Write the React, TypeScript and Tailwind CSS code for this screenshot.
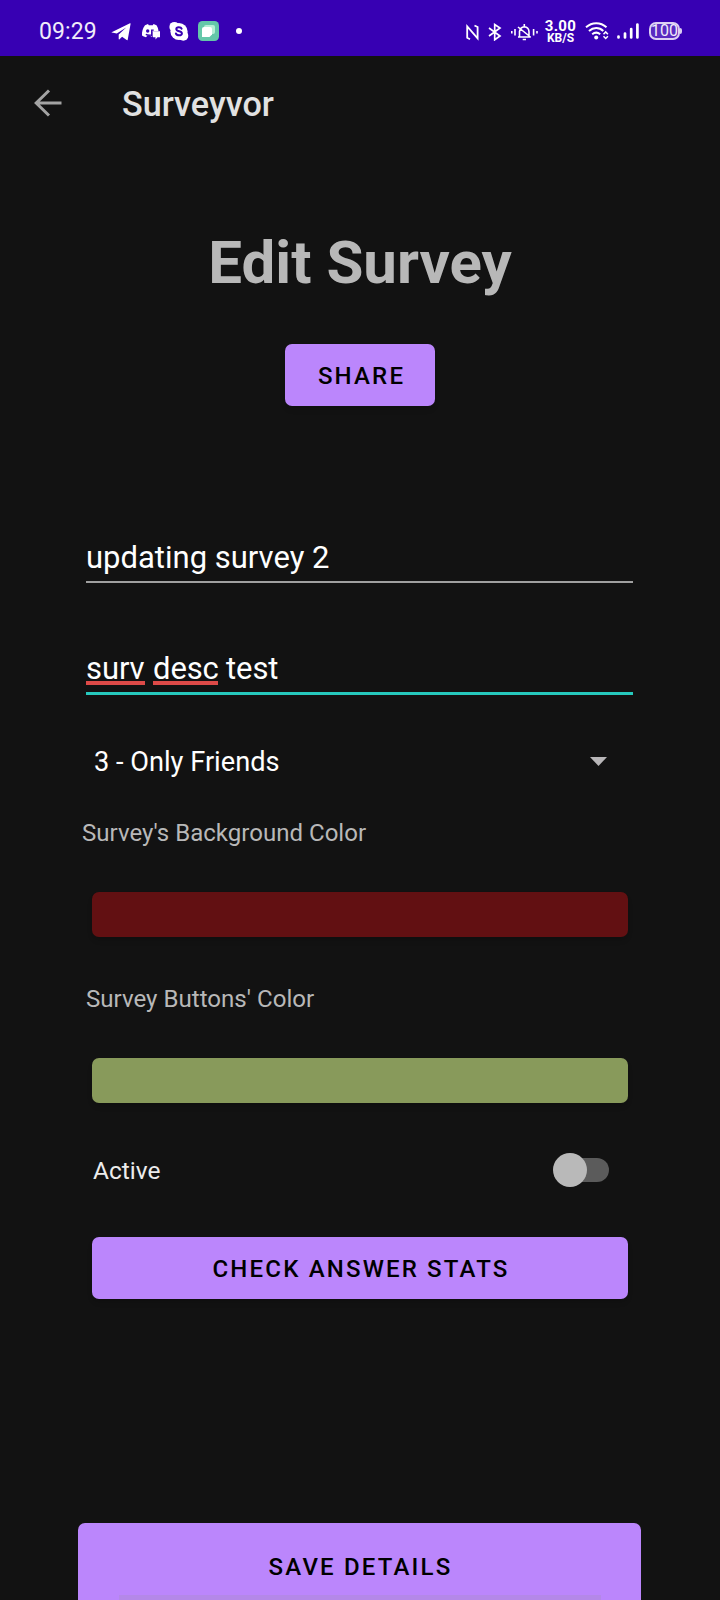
import type { ReactNode } from "react";

type IconProps = { className: string; viewBox: string; children: ReactNode };

function Glyph({ className, viewBox, children }: IconProps) {
  return (
    <svg className={`block shrink-0 ${className}`} viewBox={viewBox} fill="none" stroke="none">
      {children}
    </svg>
  );
}

function StatusBar() {
  return (
    <header className="flex h-14 items-start bg-[#3700b3] pl-[39px] pt-[18px] text-white">
      <span className="w-[72px] whitespace-nowrap pt-px text-[23px] font-normal leading-[26px] tracking-[0.100px] text-[#f1ecfa]">
        09:29
      </span>
      <Glyph className="mt-[4px] h-[20px] w-[20px]" viewBox="0 0 20 20">
        <path fill="#fff" d="M.6 10.2 19 1.2c.4-.2.7.1.6.5l-2.9 16c-.1.6-.6.7-1 .4l-4.600-3.400-2.600 2.600c-.4.4-.8.2-.8-.3v-4.400l7.500-7.200-9.400 6.200-5-1c-.4 0-.5-.2-.2-.4Z" />
      </Glyph>
      <Glyph className="ml-[10px] mt-[4px] h-[20px] w-[20px]" viewBox="0 0 20 20">
        <path fill="#fff" d="M4 3.300 7 2l.8 1.200h4L12.500 2l3 1.300c1.200 1.800 1.900 3.800 2 6h-6v5.200H10l-1-1.200H6.700l-1.700 2c-1.600-.4-2.900-1-4-1.800C.8 9.500 1.800 6.300 4 3.300Z" />
        <circle cx="6.700" cy="9" r="1.700" fill="#3700b3" />
        <path stroke="#3700b3" strokeWidth="1.300" d="M4.800 12.400c1.500.8 3.500 1 6 .6M10.700 14V8.200h2" />
        <path fill="#fff" d="M12 9.300h7v6h-2.500l-2 2.300v-2.300H12Z" />
      </Glyph>
      <Glyph className="ml-[8px] mt-[3px] h-[20px] w-[20px]" viewBox="0 0 20 20">
        <circle cx="10" cy="10.500" r="8.600" fill="#fff" />
        <circle cx="5.400" cy="5.900" r="5" fill="#fff" />
        <circle cx="14.300" cy="14.800" r="5" fill="#fff" />
        <path stroke="#3700b3" strokeWidth="2" strokeLinecap="round" d="M12.600 7.700C11.900 5.800 7.400 5.700 7.300 8c0 3 5.700 1.500 5.600 4.500-.1 2.500-5.200 2.500-6-.1" />
      </Glyph>
      <Glyph className="ml-[9px] mt-[3px] h-[20px] w-[21px]" viewBox="0 0 21 20">
        <rect width="21" height="20" rx="4.500" fill="#64c7a9" />
        <rect x="6" y="4" width="11" height="9" rx="2" fill="#b5efd5" />
        <path fill="#fff" d="M6 6h6a2 2 0 0 1 2 2v5.500L11.500 16H4V8a2 2 0 0 1 2-2Z" />
      </Glyph>
      <span className="ml-[17px] mt-[10px] h-1.5 w-1.5 shrink-0 rounded-full bg-white" />
      <Glyph className="ml-[224px] mt-[6px] h-[17px] w-[13px]" viewBox="0 0 13 17">
        <path stroke="#fff" strokeWidth="1.800" d="M4 15.200 1.200 13.800V2.500l10.400 11.800V3L8.500 1.500" />
      </Glyph>
      <Glyph className="ml-[9px] mt-[5px] h-[18px] w-[14px]" viewBox="0 0 14 18">
        <path stroke="#fff" strokeWidth="1.700" d="m1 5 11 8-5.300 3.800V1.500L12 5 1 13" />
      </Glyph>
      <Glyph className="ml-[9px] mt-[5px] h-[18px] w-[27px]" viewBox="0 0 27 18">
        <path stroke="#fff" strokeWidth="1.600" d="M.8 8v2.500M4 6v6.500M22.600 6v6.500M26 8v2.500M7 14h12.800M8.500 13.500V8.300C9 5.500 10.500 4 13.300 3.700c3 .3 4.600 2 4.700 5v5M7 4l12.500 10M13.300 1v3M11.700 16.500h3.300" />
      </Glyph>
      <div className="ml-[7px] mt-[2px] flex w-[31px] shrink-0 flex-col items-center whitespace-nowrap font-bold">
        <span className="h-[13px] text-[15px] leading-[12px] tracking-[0.300px]">3.00</span>
        <span className="h-[11px] text-[12px] leading-[11px]">KB/S</span>
      </div>
      <Glyph className="ml-[9px] mt-[4px] h-[18px] w-[24px]" viewBox="0 0 24 18">
        <path stroke="#fff" strokeWidth="2" d="M1 5.300C7-.1 15.500-.1 21.500 5.300M4 9c4.300-4 10.300-4 14.300 0M7.200 12.300c2.400-2 5.600-2 8 0" />
        <circle cx="11.200" cy="15.500" r="2" fill="#fff" />
        <path stroke="#fff" strokeWidth="1.500" d="m18.500 12.200 2.200-2.300 2.200 2.300M18.500 14.200l2.200 2.300 2.200-2.300" />
      </Glyph>
      <Glyph className="ml-[8px] mt-[5px] h-[16px] w-[22px]" viewBox="0 0 22 16">
        <path stroke="#fff" strokeWidth="2.700" strokeLinecap="round" d="M1.500 13.500v1M8 10.500v4M14.200 6v8.500M20.400 1.500v13" />
      </Glyph>
      <div className="ml-[10px] mt-[4px] flex h-[18px] w-[31px] shrink-0 items-center justify-center rounded-[7px] border-2 border-[#dcd0f3] bg-[#5a2bc1] text-[16px] font-normal leading-[16px] text-[#f1ecfa]">
        100
      </div>
      <span className="mt-[10px] h-1.5 w-[2px] shrink-0 rounded-r bg-[#d9ccf2]" />
    </header>
  );
}

function AppBar() {
  return (
    <div className="flex h-[96px] items-center pl-[34px]">
      <Glyph className="h-7 w-7" viewBox="0 0 28 28">
        <path stroke="#a3a3a3" strokeWidth="3" d="M27.500 14H2M15 1.500 2.200 14 15 26.500" />
      </Glyph>
      <h2 className="ml-[60px] pt-[2px] text-[34.200px] font-medium leading-10 text-[#e1e1e1]">Surveyvor</h2>
    </div>
  );
}

const buttonText = "text-[24px] font-medium tracking-[2.180px] text-black leading-7";

export default function App() {
  return (
    <div className="flex h-[1600px] w-[720px] flex-col overflow-hidden bg-[#121212] font-['Roboto',sans-serif]">
      <StatusBar />
      <AppBar />
      <main className="flex flex-col">
        <h1 className="mt-[77px] text-center text-[60px] font-bold leading-[70px] text-[#b8b8b8]">Edit Survey</h1>
        <button className={`mt-[46px] h-[62px] w-[150px] self-center rounded-[7px] bg-[#bb86fc] pl-[3px] pt-[2px] shadow-md ${buttonText}`}>
          SHARE
        </button>

        <div className="ml-[86px] mt-[133px] flex h-[44px] w-[547px] flex-col border-b-2 border-[#a0a0a0] pt-px text-[31px] leading-9 text-white">
          <span>updating survey 2</span>
        </div>
        <div className="ml-[86px] mt-[67px] flex h-[45px] w-[547px] items-start gap-[8px] border-b-3 border-[#26c9bd] pt-px text-[31px] leading-9 tracking-[-0.100px] text-white">
          <span className="h-[34px] w-[59px] border-b-4 border-[#dd4a48]">surv</span>
          <span className="h-[34px] w-[65px] border-b-4 border-[#dd4a48]">desc</span>
          <span>test</span>
        </div>

        <div className="ml-[94px] mt-[50px] flex h-8 w-[513px] items-center justify-between text-[27.200px] leading-8 text-white">
          <span className="pt-[2px]">3 - Only Friends</span>
          <Glyph className="h-[9px] w-[17px]" viewBox="0 0 17 9">
            <path fill="#b8b6b8" d="M0 0h17L8.500 9Z" />
          </Glyph>
        </div>

        <p className="ml-[82px] mt-[42px] text-[24.050px] leading-7 text-[#b8b8b8]">Survey's Background Color</p>
        <div className="ml-[92px] mt-[45px] h-[45px] w-[536px] rounded-[7px] bg-[#621012] shadow-md" />
        <p className="ml-[86px] mt-[48px] text-[24.100px] leading-7 text-[#b8b8b8]">Survey Buttons' Color</p>
        <div className="ml-[92px] mt-[45px] h-[45px] w-[536px] rounded-[7px] bg-[#889a5b] shadow-md" />

        <div className="ml-[93px] mt-[50px] flex h-[34px] w-[516px] items-center justify-between">
          <span className="pt-[2px] text-[24.500px] leading-7 text-[#ececec]">Active</span>
          <div className="flex h-[34px] w-[56px] items-center">
            <span className="z-10 h-[34px] w-[34px] rounded-full bg-[#b9b9b9]" />
            <span className="-ml-[28px] h-6 w-[50px] rounded-full bg-[#5b5b5b]" />
          </div>
        </div>

        <button className={`ml-[92px] mt-[50px] h-[62px] w-[536px] rounded-[7px] bg-[#bb86fc] pl-[2px] pt-[2px] shadow-md ${buttonText}`}>
          CHECK ANSWER STATS
        </button>

        <button className={`ml-[78px] mt-[224px] flex h-[77px] w-[563px] shrink-0 flex-col items-center rounded-t-[7px] bg-[#bb86fc] pt-[30px] ${buttonText}`}>
          <span className="pl-[2px]">SAVE DETAILS</span>
          <span className="mt-[14px] h-[5px] w-[482px] bg-[#b488e8]" />
        </button>
      </main>
    </div>
  );
}
